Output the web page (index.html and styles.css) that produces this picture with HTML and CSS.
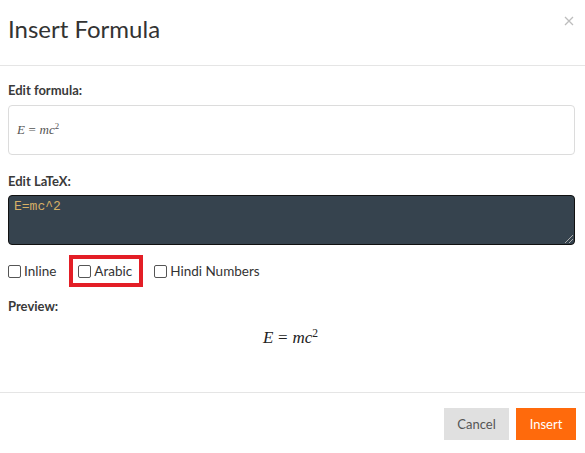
FILE: index.html
```html
<!DOCTYPE html>
<html>
<head>
<meta charset="utf-8">
<link rel="stylesheet" href="styles.css">
</head>
<body>
<div class="modal">
  <div class="modal-header">
    <h1 class="title">Insert Formula</h1>
    <button class="close" aria-label="Close">
      <svg width="10" height="10" viewBox="0 0 10 10"><path d="M1 1L9 9M9 1L1 9" stroke="#bdbdbd" stroke-width="1.3" fill="none"/></svg>
    </button>
  </div>
  <div class="modal-body">
    <div class="label">Edit formula:</div>
    <div class="formula-input"><span class="math small"><i>E</i><span class="eq">=</span><i>mc</i><sup>2</sup></span></div>
    <div class="label label-2">Edit LaTeX:</div>
    <div class="latex">E=mc^2<span class="grip"></span></div>
    <div class="checks">
      <label class="check"><span class="box"></span>Inline</label>
      <label class="check highlight"><span class="box"></span>Arabic</label>
      <label class="check"><span class="box"></span>Hindi Numbers</label>
    </div>
    <div class="label label-3">Preview:</div>
    <div class="preview"><span class="math big"><i>E</i><span class="eq">=</span><i>mc</i><sup>2</sup></span></div>
  </div>
  <div class="modal-footer">
    <button class="btn btn-cancel">Cancel</button>
    <button class="btn btn-insert">Insert</button>
  </div>
</div>
</body>
</html>
```
FILE: styles.css
```css
* { box-sizing: border-box; }
html, body { margin: 0; padding: 0; background: #fff; }
body { font-family: Lato, "Open Sans", sans-serif; color: #333; }
.modal { width: 585px; height: 453px; background: #fff; }
.modal-header {
  height: 66px;
  border-bottom: 1px solid #e5e5e5;
  padding: 14px 9px 0 8px;
  display: flex;
  justify-content: space-between;
  align-items: flex-start;
}
.title { margin: 0; font-size: 24px; line-height: 30px; font-weight: 400; color: #333; }
.close { border: 0; background: none; padding: 0; margin: 1px 1px 0 0; width: 12px; height: 12px; display: flex; align-items: center; justify-content: center; }
.modal-body { padding: 15px 10px 0 8px; height: 326px; }
.label { font-size: 13px; line-height: 18px; font-weight: 700; color: #3a3a3a; }
.formula-input {
  margin-top: 6px;
  height: 50px;
  border: 1px solid #dcdcdc;
  border-radius: 4px;
  padding: 0 0 0 8px;
  display: flex;
  align-items: center;
}
.math { font-family: "Liberation Serif", "DejaVu Serif", serif; white-space: nowrap; }
.math sup { font-size: 0.68em; line-height: 0; vertical-align: 0.55em; font-style: normal; }
.math .eq { margin: 0 0.28em; }
.math.small { font-size: 13px; color: #555; }
.math.big { font-size: 17px; color: #222; }
.label-2 { margin-top: 17px; }
.latex {
  margin-top: 5px;
  height: 50px;
  background: #36434e;
  border: 1px solid #111;
  border-radius: 4px;
  padding: 3px 5px;
  font-family: "Liberation Mono", monospace;
  font-size: 13px;
  line-height: 16px;
  color: #d6b066;
  position: relative;
}
.grip {
  position: absolute; right: 1px; bottom: 1px; width: 8px; height: 8px;
  background: linear-gradient(135deg, transparent 45%, #aaa 45%, #aaa 52%, transparent 52%, transparent 70%, #aaa 70%, #aaa 77%, transparent 77%);
}
.checks { margin-top: 10px; height: 32px; display: flex; align-items: center; }
.check { display: flex; align-items: center; font-size: 13.5px; color: #333; }
.box { width: 13px; height: 13px; border: 1px solid #555; border-radius: 2px; background: #fff; margin-right: 3px; }
.highlight { border: 4px solid #e31e26; height: 32px; padding: 0 7px 0 5px; margin: 0 11px 0 13px; }
.label-3 { margin-top: 10px; }
.preview { margin-top: 10px; text-align: center; line-height: 24px; padding-right: 2px; }
.modal-footer {
  border-top: 1px solid #e5e5e5;
  padding: 15px 9px 0 0;
  display: flex;
  justify-content: flex-end;
  gap: 7px;
}
.btn { height: 32px; border: 0; border-radius: 0; font-family: Lato, sans-serif; font-size: 13px; padding: 0; }
.btn-cancel { width: 65px; background: #e0e0e0; color: #555; }
.btn-insert { width: 60px; background: #ff6a0c; color: #fff; }
```
